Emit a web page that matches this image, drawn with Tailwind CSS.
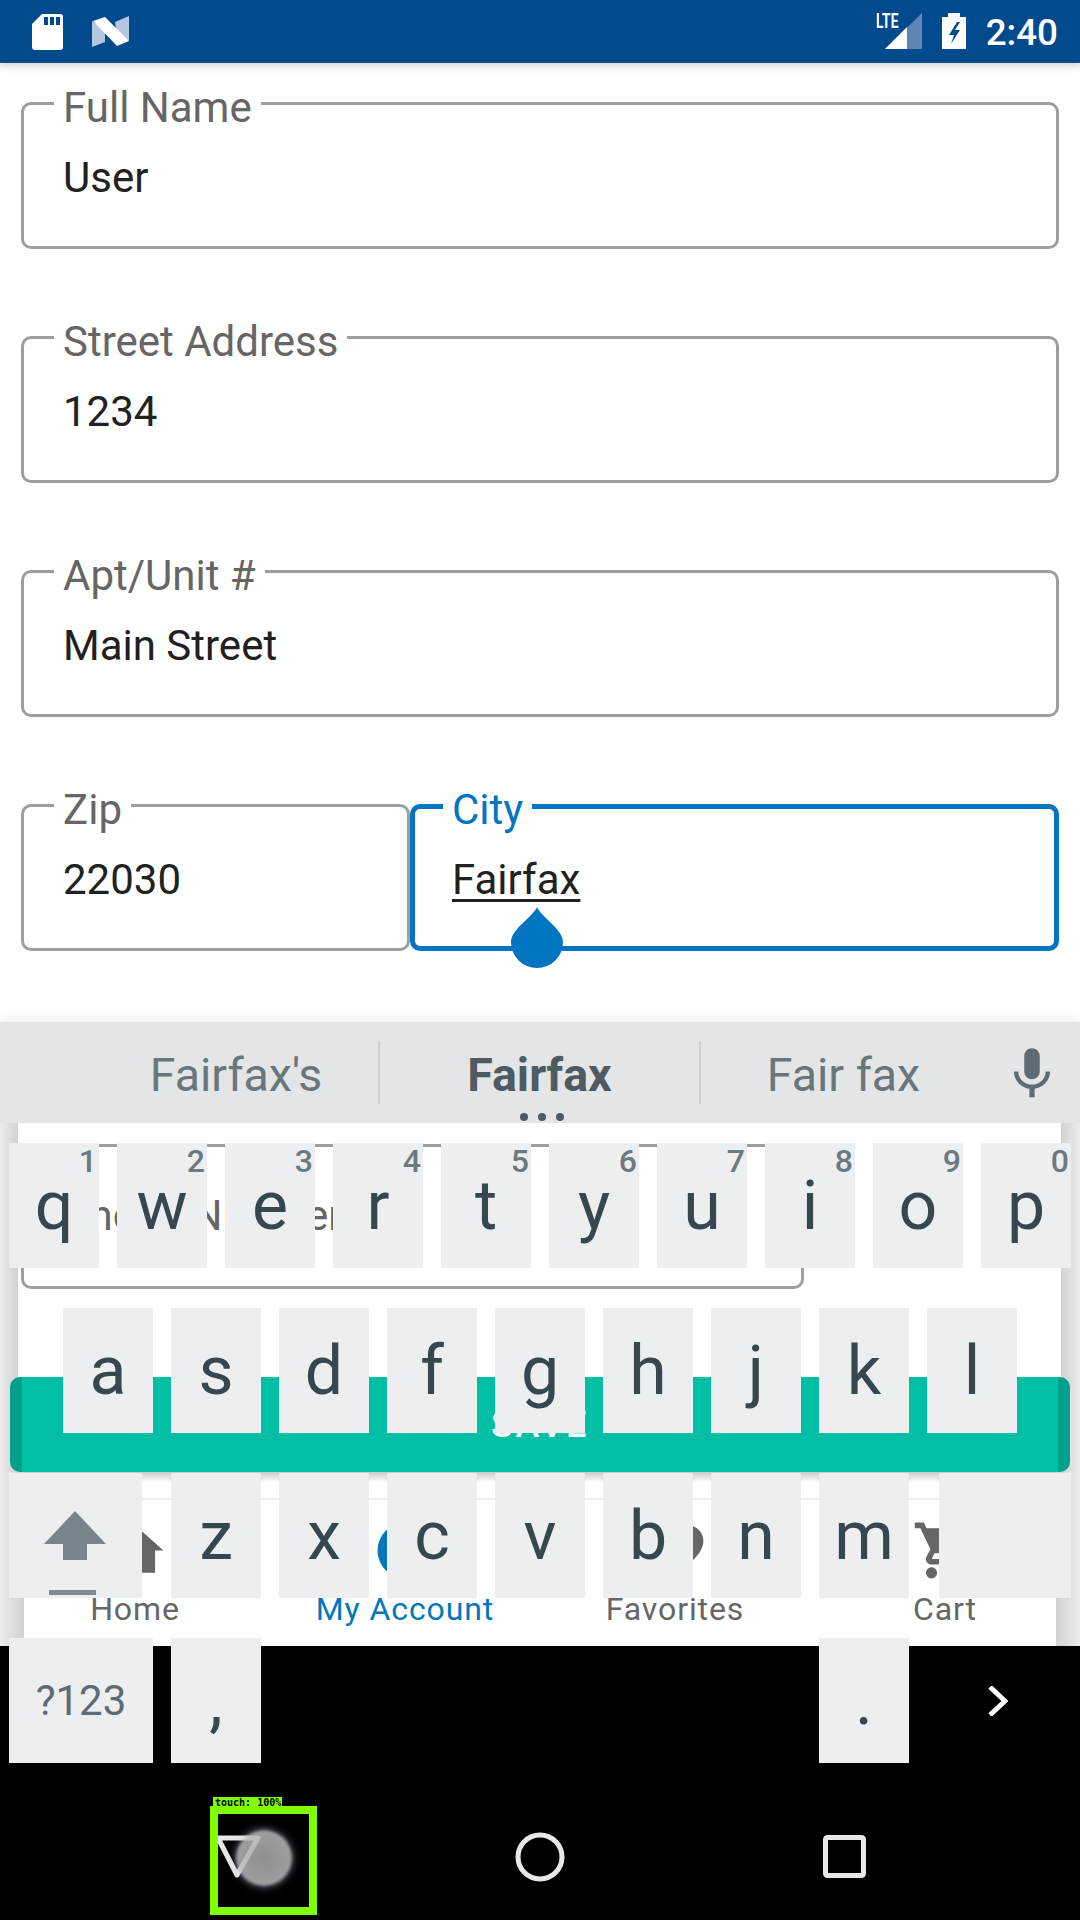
<!DOCTYPE html>
<html lang="en">
<head>
    <meta charset="UTF-8">
    <meta name="viewport" content="width=device-width, initial-scale=1.0">
    <title>My Account - Address</title>
    <script src="https://cdn.jsdelivr.net/npm/@tailwindcss/browser@4"></script>
</head>
<body class="relative w-[1080px] h-[1920px] overflow-hidden bg-white font-[Roboto,sans-serif]">

    <!-- Status bar -->
    <header class="relative z-10 h-[63px] bg-[#014a8e] shadow-[0_3px_8px_rgba(0,0,0,0.18)] flex items-start text-white">
        <svg class="ml-[32px] mt-[14px]" width="31" height="36" viewBox="0 0 31 36">
            <path d="M10 0H28a3 3 0 0 1 3 3V33a3 3 0 0 1-3 3H3a3 3 0 0 1-3-3V10Z" fill="#fff"/>
            <rect x="12" y="3" width="4" height="8" fill="#014a8e"/>
            <rect x="18" y="3" width="4" height="8" fill="#014a8e"/>
            <rect x="24" y="3" width="4" height="8" fill="#014a8e"/>
        </svg>
        <svg class="ml-[29px] mt-[16px]" width="37" height="31" viewBox="0 0 37 31">
            <path d="M0 5 13 14V26L0 31Z" fill="#b3c7de"/>
            <path d="M23 6 37 0V25L24 14Z" fill="#b3c7de"/>
            <path d="M1 5 13 1 37 25 25 30Z" fill="#fff"/>
        </svg>
        <div class="ml-auto relative w-[46px] h-[50px] mr-[20px]">
            <span class="absolute left-0 top-[10px] text-[20px] leading-[23px] font-bold origin-left scale-x-[0.7]">LTE</span>
            <svg class="absolute left-[9px] top-[13px]" width="37" height="36" viewBox="0 0 37 36">
                <path d="M0 36 37 0V36Z" fill="#5d86b5"/>
                <path d="M0 36 22 14V36Z" fill="#fff"/>
            </svg>
        </div>
        <svg class="mt-[13px]" width="24" height="36" viewBox="0 0 24 36">
            <path d="M6 4V0H18V4H24V36H0V4Z" fill="#fff"/>
            <path d="M15 9 7 22H12L9 31 18 17H13L18 9Z" fill="#014a8e"/>
        </svg>
        <span class="ml-[20px] mr-[22px] mt-[12px] text-[36.75px] leading-[41px] font-medium">2:40</span>
    </header>

    <!-- Grey edges of the sheet behind the keyboard -->
    <div class="absolute left-0 top-[1123px] w-[18px] h-[349px] bg-linear-to-r from-[#ececec] to-[#d2d2d2]"></div>
    <div class="absolute left-0 top-[1472px] w-[24px] h-[174px] bg-linear-to-r from-[#ececec] to-[#d2d2d2]"></div>
    <div class="absolute right-0 top-[1123px] w-[19px] h-[349px] bg-linear-to-l from-[#ececec] to-[#d2d2d2]"></div>
    <div class="absolute right-0 top-[1472px] w-[24px] h-[174px] bg-linear-to-l from-[#ececec] to-[#d2d2d2]"></div>

    <!-- Address form -->
    <main class="pl-[21px] pr-[21px] pt-[39px] flex flex-col gap-[87px]">
        <div class="relative h-[147px] border-[3px] border-[#9e9e9e] rounded-[10px] pl-[39px] pt-[48px] text-[42px] leading-[50px] text-[#212121]">
            <label class="absolute left-[30px] top-[-21px] px-[9px] bg-white text-[42px] leading-[48px] text-[#666666]">Full Name</label>
            User
        </div>
        <div class="relative h-[147px] border-[3px] border-[#9e9e9e] rounded-[10px] pl-[39px] pt-[48px] text-[42px] leading-[50px] text-[#212121]">
            <label class="absolute left-[30px] top-[-21px] px-[9px] bg-white text-[42px] leading-[48px] text-[#666666]">Street Address</label>
            1234
        </div>
        <div class="relative h-[147px] border-[3px] border-[#9e9e9e] rounded-[10px] pl-[39px] pt-[48px] text-[42px] leading-[50px] text-[#212121]">
            <label class="absolute left-[30px] top-[-21px] px-[9px] bg-white text-[42px] leading-[48px] text-[#666666]">Apt/Unit #</label>
            Main Street
        </div>
        <div class="flex">
            <div class="relative w-[389px] h-[147px] border-[3px] border-[#9e9e9e] rounded-[10px] pl-[39px] pt-[48px] text-[42px] leading-[50px] text-[#212121]">
                <label class="absolute left-[30px] top-[-21px] px-[9px] bg-white text-[42px] leading-[48px] text-[#666666]">Zip</label>
                22030
            </div>
            <div class="relative flex-1 h-[147px] border-[5px] border-[#0175c2] rounded-[10px] pl-[37px] pt-[46px] text-[42px] leading-[50px] text-[#212121]">
                <label class="absolute left-[28px] top-[-23px] px-[9px] bg-white text-[42px] leading-[48px] text-[#0175c2]">City</label>
                <span class="underline decoration-[3px] underline-offset-[5px]">Fairfax</span>
                <svg class="absolute left-[96px] top-[98px]" width="52" height="61" viewBox="0 0 52 61">
                    <path d="M26 0C30 10 52 22 52 35A26 26 0 1 1 0 35C0 22 22 10 26 0Z" fill="#0175c2"/>
                </svg>
            </div>
        </div>
        <div class="relative mt-[106px] w-[783px] h-[145px] border-[3px] border-[#9e9e9e] rounded-[10px]">
            <label class="absolute left-[39px] top-[45px] text-[42px] leading-[48px] text-[#666666]">Phone Number</label>
        </div>
    </main>

    <!-- Save button and bottom tabs, mostly under the keyboard -->
    <button class="relative block ml-[10px] mt-[88px] w-[1060px] h-[95px] rounded-[10px] bg-[#00bfa5] border-x-[12px] border-[#00a08c] text-white text-[36px] font-medium tracking-[2.5px]">SAVE</button>
    <div class="h-[26px] bg-linear-to-b from-[#c9c9c9] via-white via-[40%] to-white"></div>
    <nav class="h-[148px] border-t-2 border-[#eeeeee] pt-[17px] grid grid-cols-4 text-center text-[32px] tracking-[0.9px] leading-[36px] text-[#666666]">
        <div class="flex flex-col items-center">
            <svg width="67" height="67" viewBox="0 0 24 24" fill="#666666"><path d="M10 20v-6h4v6h5v-8h3L12 3 2 12h3v8z"/></svg>
            <span class="mt-[7px]">Home</span>
        </div>
        <div class="flex flex-col items-center text-[#0277bd]">
            <svg width="67" height="67" viewBox="0 0 24 24" fill="#0277bd"><path d="M12 2C6.48 2 2 6.48 2 12s4.48 10 10 10 10-4.48 10-10S17.52 2 12 2zm0 3c1.66 0 3 1.34 3 3s-1.34 3-3 3-3-1.34-3-3 1.34-3 3-3zm0 14.2c-2.5 0-4.71-1.28-6-3.22.03-1.99 4-3.08 6-3.08 1.99 0 5.97 1.09 6 3.08-1.29 1.94-3.5 3.22-6 3.22z"/></svg>
            <span class="mt-[7px]">My Account</span>
        </div>
        <div class="flex flex-col items-center">
            <svg width="67" height="67" viewBox="0 0 24 24" fill="#666666"><path d="M12 21.35l-1.45-1.32C5.4 15.36 2 12.28 2 8.5 2 5.42 4.42 3 7.5 3c1.74 0 3.41.81 4.5 2.09C13.09 3.81 14.76 3 16.5 3 19.58 3 22 5.42 22 8.5c0 3.78-3.4 6.86-8.55 11.54L12 21.35z"/></svg>
            <span class="mt-[7px]">Favorites</span>
        </div>
        <div class="flex flex-col items-center">
            <svg width="67" height="67" viewBox="0 0 24 24" fill="#666666"><path d="M7 18c-1.1 0-1.99.9-1.99 2S5.9 22 7 22s2-.9 2-2-.9-2-2-2zM1 2v2h2l3.6 7.59-1.35 2.45c-.16.28-.25.61-.25.96 0 1.1.9 2 2 2h12v-2H7.42c-.14 0-.25-.11-.25-.25l.03-.12.9-1.63h7.45c.75 0 1.41-.41 1.75-1.03l3.58-6.49c.08-.14.12-.31.12-.48 0-.55-.45-1-1-1H5.21l-.94-2H1zm16 16c-1.1 0-1.99.9-1.99 2s.89 2 1.99 2 2-.9 2-2-.9-2-2-2z"/></svg>
            <span class="mt-[7px]">Cart</span>
        </div>
    </nav>

    <!-- Navigation bar -->
    <footer class="h-[274px] bg-black relative">
        <svg class="absolute left-[210px] top-[185px]" width="60" height="50" viewBox="0 0 60 50" fill="none" stroke="#e8e8e8" stroke-width="5" stroke-linejoin="round">
            <path d="M8 7H48L27 44Z"/>
        </svg>
        <svg class="absolute left-[515px] top-[186px]" width="50" height="50" viewBox="0 0 50 50" fill="none" stroke="#e8e8e8" stroke-width="5">
            <circle cx="25" cy="25" r="22"/>
        </svg>
        <svg class="absolute left-[823px] top-[189px]" width="43" height="43" viewBox="0 0 43 43" fill="none" stroke="#e8e8e8" stroke-width="5" stroke-linejoin="round">
            <rect x="2.5" y="2.5" width="38" height="38" rx="2"/>
        </svg>
    </footer>

    <!-- Touch marker -->
    <div class="absolute left-[236px] top-[1830px] w-[56px] h-[56px] rounded-full blur-[1.5px] bg-[radial-gradient(circle,#a8a8a8_0%,#bdbdbf_75%,#d0d0de_100%)] shadow-[0_0_8px_rgba(190,190,235,0.7)] opacity-85"></div>
    <div class="absolute left-[210px] top-[1806px] w-[107px] h-[109px] border-[8px] border-[#7fff00]"></div>
    <div class="absolute left-[213px] top-[1797px] w-[69px] h-[12px] pl-[2px] bg-[#7fff00] text-black text-[10px] leading-[12px] font-bold font-['DejaVu_Sans_Mono',monospace] whitespace-nowrap">touch: 100%</div>

    <!-- Keyboard, drawn over the page with see-through gaps -->
    <section class="absolute left-0 top-[1022px] w-[1080px]">
        <div class="relative h-[101px] bg-[#e3e5e7] shadow-[0_-6px_10px_rgba(0,0,0,0.05)] flex items-center pl-[94px] text-[46.5px] text-[#69767c]">
            <span class="w-[284px] pt-[6px] text-center">Fairfax's</span>
            <span class="w-[2px] h-[63px] bg-[#cfd2d5]"></span>
            <span class="w-[319px] pt-[6px] text-center font-bold text-[#4f5b62]">Fairfax</span>
            <span class="w-[2px] h-[63px] bg-[#cfd2d5]"></span>
            <span class="w-[285px] pt-[6px] text-center">Fair fax</span>
            <svg class="ml-[15px] mb-[-2px]" width="62" height="62" viewBox="0 0 24 24" fill="#5f6b72"><path d="M12 14c1.66 0 2.99-1.34 2.99-3L15 5c0-1.66-1.34-3-3-3S9 3.34 9 5v6c0 1.66 1.34 3 3 3zm5.3-3c0 3-2.54 5.1-5.3 5.1S6.7 14 6.7 11H5c0 3.41 2.72 6.23 6 6.72V21h2v-3.28c3.28-.48 6-3.3 6-6.72h-1.7z"/></svg>
            <div class="absolute left-[520px] top-[91px] flex gap-[10px]">
                <span class="w-[8px] h-[8px] rounded-full bg-[#4f5b62]"></span>
                <span class="w-[8px] h-[8px] rounded-full bg-[#4f5b62]"></span>
                <span class="w-[8px] h-[8px] rounded-full bg-[#4f5b62]"></span>
            </div>
        </div>

        <div class="pt-[20px] flex flex-col gap-[40px] text-[68px] leading-[80px] text-[#37474f]">
            <div class="flex pl-[9px] gap-[18px]">
                <div class="relative w-[90px] h-[125px] pt-[23px] bg-[#eceef0] text-center">q<span class="absolute top-[3px] right-[2px] text-[32px] leading-[31px] font-medium text-[#6b7a80]">1</span></div>
                <div class="relative w-[90px] h-[125px] pt-[23px] bg-[#eceef0] text-center">w<span class="absolute top-[3px] right-[2px] text-[32px] leading-[31px] font-medium text-[#6b7a80]">2</span></div>
                <div class="relative w-[90px] h-[125px] pt-[23px] bg-[#eceef0] text-center">e<span class="absolute top-[3px] right-[2px] text-[32px] leading-[31px] font-medium text-[#6b7a80]">3</span></div>
                <div class="relative w-[90px] h-[125px] pt-[23px] bg-[#eceef0] text-center">r<span class="absolute top-[3px] right-[2px] text-[32px] leading-[31px] font-medium text-[#6b7a80]">4</span></div>
                <div class="relative w-[90px] h-[125px] pt-[23px] bg-[#eceef0] text-center">t<span class="absolute top-[3px] right-[2px] text-[32px] leading-[31px] font-medium text-[#6b7a80]">5</span></div>
                <div class="relative w-[90px] h-[125px] pt-[23px] bg-[#eceef0] text-center">y<span class="absolute top-[3px] right-[2px] text-[32px] leading-[31px] font-medium text-[#6b7a80]">6</span></div>
                <div class="relative w-[90px] h-[125px] pt-[23px] bg-[#eceef0] text-center">u<span class="absolute top-[3px] right-[2px] text-[32px] leading-[31px] font-medium text-[#6b7a80]">7</span></div>
                <div class="relative w-[90px] h-[125px] pt-[23px] bg-[#eceef0] text-center">i<span class="absolute top-[3px] right-[2px] text-[32px] leading-[31px] font-medium text-[#6b7a80]">8</span></div>
                <div class="relative w-[90px] h-[125px] pt-[23px] bg-[#eceef0] text-center">o<span class="absolute top-[3px] right-[2px] text-[32px] leading-[31px] font-medium text-[#6b7a80]">9</span></div>
                <div class="relative w-[90px] h-[125px] pt-[23px] bg-[#eceef0] text-center">p<span class="absolute top-[3px] right-[2px] text-[32px] leading-[31px] font-medium text-[#6b7a80]">0</span></div>
            </div>
            <div class="flex pl-[63px] gap-[18px]">
                <div class="w-[90px] h-[125px] pt-[23px] bg-[#eceef0] text-center">a</div>
                <div class="w-[90px] h-[125px] pt-[23px] bg-[#eceef0] text-center">s</div>
                <div class="w-[90px] h-[125px] pt-[23px] bg-[#eceef0] text-center">d</div>
                <div class="w-[90px] h-[125px] pt-[23px] bg-[#eceef0] text-center">f</div>
                <div class="w-[90px] h-[125px] pt-[23px] bg-[#eceef0] text-center">g</div>
                <div class="w-[90px] h-[125px] pt-[23px] bg-[#eceef0] text-center">h</div>
                <div class="w-[90px] h-[125px] pt-[23px] bg-[#eceef0] text-center">j</div>
                <div class="w-[90px] h-[125px] pt-[23px] bg-[#eceef0] text-center">k</div>
                <div class="w-[90px] h-[125px] pt-[23px] bg-[#eceef0] text-center">l</div>
            </div>
            <div class="flex pl-[9px] gap-[18px]">
                <div class="w-[133px] h-[125px] mr-[11px] bg-[#eceef0]">
                    <svg width="133" height="125" viewBox="0 0 133 125">
                        <path d="M66 38 97 71H78V87H54V71H35Z" fill="#78868c"/>
                        <rect x="40" y="117" width="47" height="5" fill="#7f8b91"/>
                    </svg>
                </div>
                <div class="w-[90px] h-[125px] pt-[23px] bg-[#eceef0] text-center">z</div>
                <div class="w-[90px] h-[125px] pt-[23px] bg-[#eceef0] text-center">x</div>
                <div class="w-[90px] h-[125px] pt-[23px] bg-[#eceef0] text-center">c</div>
                <div class="w-[90px] h-[125px] pt-[23px] bg-[#eceef0] text-center">v</div>
                <div class="w-[90px] h-[125px] pt-[23px] bg-[#eceef0] text-center">b</div>
                <div class="w-[90px] h-[125px] pt-[23px] bg-[#eceef0] text-center">n</div>
                <div class="w-[90px] h-[125px] pt-[23px] bg-[#eceef0] text-center">m</div>
                <div class="w-[132px] h-[125px] ml-[12px] bg-[#eceef0]"></div>
            </div>
            <div class="flex pl-[9px] items-start">
                <div class="w-[144px] h-[125px] bg-[#eceef0] text-center text-[42px] leading-[125px] text-[#5f6b72]">?123</div>
                <div class="w-[90px] h-[125px] ml-[18px] pt-[23px] bg-[#eceef0] text-center">,</div>
                <div class="w-[90px] h-[125px] ml-[558px] pt-[23px] bg-[#eceef0] text-center">.</div>
                <svg class="ml-[78px] mt-[48px]" width="21" height="30" viewBox="0 0 21 30" fill="none" stroke="#ffffff" stroke-width="5">
                    <path d="M3 1 18 15 3 29"/>
                </svg>
            </div>
        </div>
    </section>
</body>
</html>
